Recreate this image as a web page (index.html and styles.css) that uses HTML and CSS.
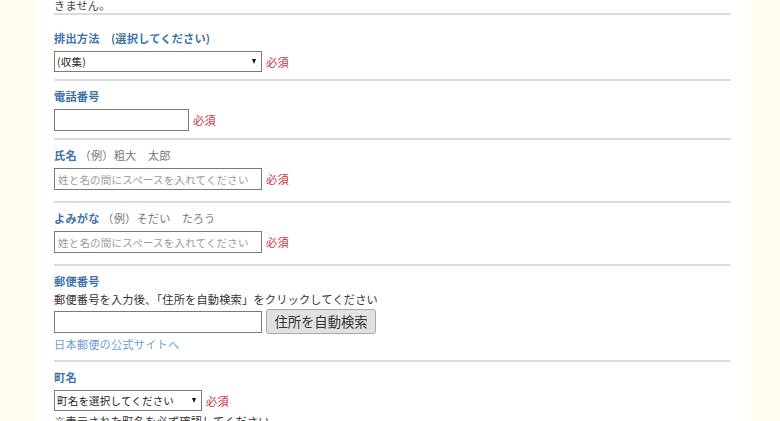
FILE: index.html
```html
<!DOCTYPE html>
<html lang="ja">
<head>
  <meta charset="UTF-8">
  <meta name="viewport" content="width=device-width, initial-scale=1.0">
  <title>粗大ごみ申込</title>
  <link rel="stylesheet" href="styles.css">
</head>
<body>
  <div class="page">
    <form class="apply-form">
      <p class="intro">きません。</p>

      <section class="field field-first">
        <h3 class="label">排出方法　(選択してください)</h3>
        <div class="row">
          <span class="select-wrap wide">
            <select class="select">
              <option>(収集)</option>
              <option>(持込)</option>
            </select>
            <span class="arrow"></span>
          </span>
          <span class="req">必須</span>
        </div>
      </section>

      <section class="field">
        <h3 class="label">電話番号</h3>
        <div class="row">
          <input type="tel" class="input short">
          <span class="req">必須</span>
        </div>
      </section>

      <section class="field field-loose">
        <h3 class="label">氏名 <span class="example">（例）粗大　太郎</span></h3>
        <div class="row">
          <input type="text" class="input" placeholder="姓と名の間にスペースを入れてください">
          <span class="req">必須</span>
        </div>
      </section>

      <section class="field field-loose">
        <h3 class="label">よみがな <span class="example">（例）そだい　たろう</span></h3>
        <div class="row">
          <input type="text" class="input" placeholder="姓と名の間にスペースを入れてください">
          <span class="req">必須</span>
        </div>
      </section>

      <section class="field field-zip">
        <h3 class="label">郵便番号</h3>
        <p class="note">郵便番号を入力後、「住所を自動検索」をクリックしてください</p>
        <div class="row">
          <input type="text" class="input">
          <button type="button" class="search-btn">住所を自動検索</button>
        </div>
        <a class="link" href="#">日本郵便の公式サイトへ</a>
      </section>

      <section class="field">
        <h3 class="label">町名</h3>
        <div class="row">
          <span class="select-wrap narrow">
            <select class="select">
              <option>町名を選択してください</option>
            </select>
            <span class="arrow"></span>
          </span>
          <span class="req">必須</span>
        </div>
        <p class="note">※表示された町名を必ず確認してください</p>
      </section>
    </form>
  </div>
</body>
</html>
```

FILE: styles.css
```css
body {
  margin: 0;
  background: #fffdef;
  font-family: "Noto Sans CJK JP", "Noto Sans", sans-serif;
  font-size: 11.2px;
  letter-spacing: 0.2px;
  color: #333;
}

.page {
  width: 714px;
  margin-left: 36px;
  margin-top: -3px;
  background: #fff;
  padding: 0 19px 0 18px;
  box-sizing: border-box;
}

.apply-form {
  margin: 0;
}

.intro {
  margin: 0;
  line-height: 16px;
  color: #444;
  border-bottom: 2px solid #dcdcdc;
}

.field {
  padding: 7px 0 7px;
  border-bottom: 2px solid #dcdcdc;
}

.field-first {
  padding-top: 15px;
}

.field-loose {
  padding-bottom: 11px;
}

.field-zip {
  padding-bottom: 8px;
}

.label {
  margin: 0 0 5px;
  font-size: 11.2px;
  line-height: 16px;
  font-weight: bold;
  color: #3e74a9;
}

.example {
  font-weight: normal;
  color: #777;
}

.row {
  display: flex;
  align-items: center;
  gap: 4px;
}

.input {
  box-sizing: border-box;
  width: 208px;
  height: 22px;
  margin: 0;
  padding: 0 3px;
  border: 1px solid #7a7a7a;
  border-radius: 0;
  font-family: inherit;
  font-size: 10.5px;
  letter-spacing: 0.2px;
  color: #333;
  background: #fff;
}

.input::placeholder {
  color: #9a9a9a;
}

.input.short {
  width: 135px;
}

.select-wrap {
  position: relative;
  display: inline-block;
  height: 21px;
}

.select-wrap.wide {
  width: 208px;
}

.select-wrap.narrow {
  width: 148px;
}

.select {
  appearance: none;
  -webkit-appearance: none;
  box-sizing: border-box;
  width: 100%;
  height: 21px;
  margin: 0;
  padding: 0 14px 0 2px;
  border: 1px solid #7a7a7a;
  border-radius: 0;
  background: #fff;
  font-family: inherit;
  font-size: 10.5px;
  letter-spacing: 0.2px;
  color: #222;
}

.arrow {
  position: absolute;
  right: 6px;
  top: 8px;
  width: 0;
  height: 0;
  border-left: 2.5px solid transparent;
  border-right: 2.5px solid transparent;
  border-top: 5px solid #111;
  pointer-events: none;
}

.req {
  color: #c9333f;
  font-size: 11.2px;
  line-height: 16px;
}

.note {
  margin: 2px 0 0;
  line-height: 16px;
  color: #333;
}

.field-zip .label {
  margin-bottom: 2px;
}

.field-zip .note {
  margin: 0 0 2px;
}

.search-btn {
  box-sizing: border-box;
  width: 110px;
  height: 25px;
  margin: 0;
  padding: 0;
  border: 1px solid #a9a9a9;
  border-radius: 3px;
  background: #e1e1e1;
  font-family: inherit;
  font-size: 13.3px;
  color: #333;
}

.link {
  display: block;
  margin-top: 2px;
  line-height: 16px;
  color: #6b9fd3;
  text-decoration: none;
}
```
